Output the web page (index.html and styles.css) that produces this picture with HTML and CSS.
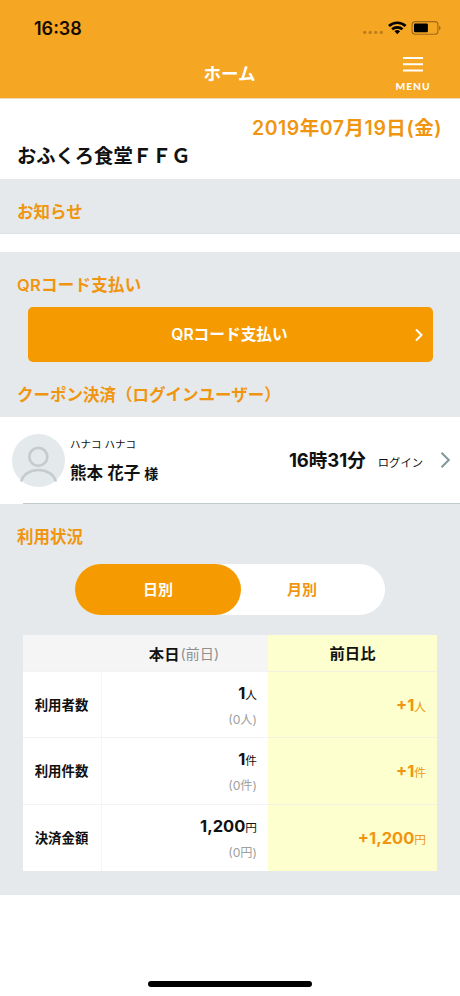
FILE: index.html
```
<!DOCTYPE html>
<html lang="ja">
<head>
<meta charset="utf-8">
<title>ホーム</title>
<link rel="stylesheet" href="styles.css">
</head>
<body>
<div class="screen">
  <header class="header">
    <div class="status">
      <span class="clock">16:38</span>
      <svg class="signals" width="78" height="18" viewBox="0 0 78 18">
        <g fill="#c07d1c"><circle cx="1.700" cy="13.4" r="1.7"/><circle cx="7.200" cy="13.4" r="1.7"/><circle cx="12.700" cy="13.4" r="1.7"/><circle cx="18.300" cy="13.4" r="1.7"/></g>
        <g fill="none" stroke="#000" stroke-width="2.700"><path d="M26 7a12.2 12.2 0 0 1 16.6 0"/><path d="M29.1 10.300a7.7 7.7 0 0 1 10.4 0"/></g>
        <path d="M34.3 15.300l-2.8-3a4 4 0 0 1 5.6 0z"/>
        <rect x="49.1" y="2.600" width="25.8" height="12.6" rx="3" fill="none" stroke="#a2691a" stroke-width="1.1"/>
        <rect x="51" y="4.500" width="13.9" height="8.8" rx="1.2"/>
        <path d="M76 6.800q1.6.6 1.6 2.1T76 11z" fill="#a2691a"/>
      </svg>
    </div>
    <div class="titlebar">
      <h1 class="title">ホーム</h1>
      <div class="menu">
        <svg width="22" height="16" viewBox="0 0 22 16" stroke="#fff" stroke-width="2"><path d="M1 2h20M1 8.2h20M1 14.4h20"/></svg>
        <span class="menu-label">MENU</span>
      </div>
    </div>
  </header>
  <section class="shop">
    <div class="date">2019年07月19日(金)</div>
    <div class="shop-name">おふくろ食堂ＦＦＧ</div>
  </section>
  <section class="notice"><h2 class="heading">お知らせ</h2></section>
  <main class="main">
    <h2 class="heading payment">QRコード支払い</h2>
    <div class="pay-button">
      <span class="pay-label">QRコード支払い</span>
      <svg class="pay-chevron" width="10" height="14" viewBox="0 0 10 14" fill="none" stroke="#fff" stroke-width="2"><path d="M2 1.5l5.5 5.5L2 12.5"/></svg>
    </div>
    <h2 class="heading coupon">クーポン決済（ログインユーザー）</h2>
    <div class="user">
      <svg class="avatar" width="53" height="53" viewBox="0 0 53 53">
        <circle cx="26.5" cy="26.5" r="26.5" fill="#e4e9ec"/>
        <g fill="none" stroke="#c6cbcd" stroke-width="2.7"><circle cx="26.3" cy="22.8" r="9"/><path d="M9.2 47.5C11 40.500 18 36 26.500 36S42 40.500 43.800 47.500"/></g>
      </svg>
      <div class="person">
        <span class="kana">ハナコ ハナコ</span>
        <span class="name">熊本 花子 <small class="honorific">様</small></span>
      </div>
      <div class="login"><span class="login-time">16時31分</span><span class="login-label">ログイン</span></div>
      <svg class="user-chevron" width="11" height="18" viewBox="0 0 11 18" fill="none" stroke="#82979b" stroke-width="2"><path d="M1.500 1.700L8.800 9l-7.300 7.300"/></svg>
    </div>
    <h2 class="heading usage">利用状況</h2>
    <div class="toggle"><span class="tab active">日別</span><span class="tab">月別</span></div>
    <div class="table">
      <div class="cell head"></div>
      <div class="cell head today"><b>本日</b><span class="previous">(前日)</span></div>
      <div class="cell change head-change">前日比</div>

      <div class="cell label">利用者数</div>
      <div class="cell value"><span class="amount">1<small class="unit">人</small></span><span class="before">(0人)</span></div>
      <div class="cell change">+1<small class="unit">人</small></div>

      <div class="cell label">利用件数</div>
      <div class="cell value"><span class="amount">1<small class="unit">件</small></span><span class="before">(0件)</span></div>
      <div class="cell change">+1<small class="unit">件</small></div>

      <div class="cell label">決済金額</div>
      <div class="cell value"><span class="amount">1,200<small class="unit">円</small></span><span class="before">(0円)</span></div>
      <div class="cell change">+1,200<small class="unit">円</small></div>
    </div>
  </main>
  <footer class="footer"><div class="home-bar"></div></footer>
</div>
</body>
</html>
```
FILE: styles.css
```
* { box-sizing: border-box; }
body {
  margin: 0;
  background: #fff;
  color: #111;
  font-family: Inter, "Noto Sans CJK JP", sans-serif;
}
svg { display: block; }
.screen { width: 460px; height: 996px; display: flex; flex-direction: column; overflow: hidden; }

.header { height: 99px; background: #f5a623; border-bottom: 1px solid #eed9bd; }
.status { height: 50px; padding: 19px 19px 0 34px; display: flex; justify-content: space-between; }
.clock { font-size: 18px; line-height: 19px; font-weight: 600; color: #140b00; }
.signals { overflow: visible; }
.titlebar { height: 48px; display: grid; grid-template-columns: 1fr 100px 1fr; color: #fff; }
.title { grid-column: 2; margin: 0 0 0 -1px; text-align: center; font-size: 17.5px; line-height: 48px; font-weight: 600; }
.menu { justify-self: end; width: 40px; margin-right: 27px; padding-top: 6px; display: flex; flex-direction: column; align-items: center; gap: 9px; }
.menu-label { font-family: Lato, sans-serif; font-size: 10.200px; line-height: 10px; font-weight: 900; letter-spacing: 1px; }

.shop { height: 80px; padding: 17px 19px 0 17px; }
.date { text-align: right; font-size: 19.5px; line-height: 24px; font-weight: 600; letter-spacing: .52px; margin-right: -1px; color: #f0950f; white-space: nowrap; }
.shop-name { margin-top: 3px; font-size: 19.300px; line-height: 26px; font-weight: 600; }

.heading { margin: 0; padding-left: 17px; font-size: 16.5px; line-height: 24px; font-weight: 600; color: #f0950f; white-space: nowrap; }
.notice { height: 55px; padding-top: 21px; background: #e5e9ec; border-bottom: 1px solid #dde1e3; }

.main { height: 643px; margin-top: 18px; padding-top: 21px; background: #e5e9ec; }
.payment { letter-spacing: .25px; }
.pay-button { height: 55px; margin: 10px 27.5px 0; padding: 0 9px; display: grid; grid-template-columns: 1fr auto 1fr; align-items: center; background: #f59a00; border-radius: 5px; color: #fff; }
.pay-label { grid-column: 2; margin: -2px 0 0 -1px; font-size: 15.700px; font-weight: 600; }
.pay-chevron { justify-self: end; }
.coupon { margin-top: 21px; font-size: 16.500px; }
.user { height: 87px; margin-top: 10px; padding: 0 9px 0 12px; display: flex; align-items: center; background: linear-gradient(#c4cbce, #c4cbce) 23px 100% / 100% 1px no-repeat #fff; }
.person { margin-left: 5px; display: flex; flex-direction: column; }
.kana { margin-top: 1px; font-size: 10.500px; line-height: 16px; }
.name { margin-top: 8px; font-size: 16.500px; line-height: 24px; font-weight: 600; white-space: nowrap; }
.honorific { font-size: 14px; }
.login { margin: -3px 0 0 auto; display: flex; align-items: baseline; }
.login-time { font-size: 18.500px; font-weight: 700; }
.login-label { margin-left: 12px; font-size: 11.300px; }
.user-chevron { margin-left: 17px; margin-top: -1px; }
.usage { margin-top: 21px; }

.toggle { width: 310px; height: 51px; margin: 14.500px 0 0 75px; display: flex; background: #fff; border-radius: 26px; }
.tab { width: 144px; padding-right: 22px; text-align: center; font-size: 15px; line-height: 51px; font-weight: 600; color: #f0950f; }
.tab.active { width: 166px; padding: 0; background: #f59a00; border-radius: 26px; color: #fff; }

.table { width: 414px; height: 236px; margin: 20.500px 0 0 23px; display: grid; grid-template-columns: 78px 167px 169px; grid-template-rows: 36px 66px 67px 67px; background: #fff; }
.cell { border-top: 1px solid #f2f3f4; border-left: 1px solid #f4f5f6; display: flex; align-items: center; }
.head { background: #f5f5f5; border-color: #f5f5f5; }
.today { justify-content: center; padding: 0 2px 2px 0; font-size: 15.300px; }
.previous { margin-left: 1px; color: #909090; font-size: 14.200px; }
.label { justify-content: center; padding: 0 1px 2px 0; border-left: 0; font-size: 13.400px; font-weight: 600; }
.value { padding: 3px 11px 0 0; flex-direction: column; align-items: flex-end; justify-content: center; }
.amount { font-size: 16.500px; line-height: 25px; font-weight: 700; }
.unit { font-size: 11.700px; font-weight: 400; }
.before { font-size: 12.200px; line-height: 25px; color: #a0a0a0; margin-top: -1px; }
.change { padding-right: 11px; justify-content: flex-end; align-items: baseline; background: #feffcf; border-left: 0; border-top-color: #f1f3df; color: #f0950f; font-size: 16.500px; line-height: 66px; font-weight: 700; }
.head-change { padding: 0; justify-content: center; border-top-color: #feffcf; color: #111; font-size: 15.300px; line-height: 36px; }

.footer { flex: 1; display: flex; align-items: flex-end; justify-content: center; padding-bottom: 9px; }
.home-bar { width: 164px; height: 6px; border-radius: 3px; background: #000; }
```
